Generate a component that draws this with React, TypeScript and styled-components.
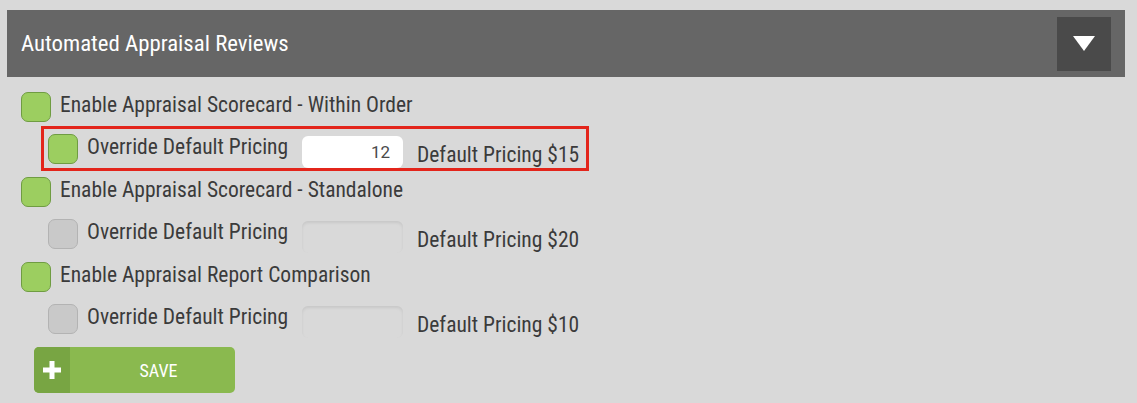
import React, { useState } from 'react';
import styled, { createGlobalStyle } from 'styled-components';

const GlobalStyle = createGlobalStyle`
    body {
        margin : 0;
        background-color : #d9d9d9;
        font-family : "Roboto Condensed", Roboto, "Liberation Sans", sans-serif;
    }
`;

const Page = styled.div`
    padding : 10px 12px 0 7px;
    height : 403px;
    box-sizing : border-box;
`;

const Header = styled.div`
    height : 67px;
    background-color : #666666;
    display : flex;
    align-items : center;
    justify-content : space-between;
    padding : 0 14px;
`;

const HeaderTitle = styled.h2`
    margin : 0;
    color : #ffffff;
    font-size : 22.8px;
    font-weight : 400;
`;

const ToggleBtn = styled.button`
    width : 54px;
    height : 54px;
    border : none;
    background-color : #4a4a4a;
    display : flex;
    align-items : center;
    justify-content : center;
    padding : 0;
`;

const Body = styled.div`
    padding : 15px 0 0 14px;
    display : flex;
    flex-direction : column;
    align-items : flex-start;
`;

const Group = styled.div`
    display : flex;
    flex-direction : column;
    align-items : flex-start;
`;

const MainRow = styled.label`
    display : flex;
    align-items : flex-start;
    height : 30px;
    gap : 9px;
    color : #3b3b3b;
    font-size : 21.5px;
    line-height : 26px;
    white-space : nowrap;
`;

const Box = styled.span<{ $checked: boolean }>`
    width : 30px;
    height : 30px;
    box-sizing : border-box;
    border-radius : 7px;
    flex-shrink : 0;
    background-color : ${(p) => (p.$checked ? '#9cce60' : '#c9c9c9')};
    border : 1.5px solid ${(p) => (p.$checked ? '#6f9c42' : '#b3b3b3')};
`;

const SubWrap = styled.div<{ $highlight?: boolean }>`
    display : flex;
    align-items : flex-start;
    height : 34px;
    margin : 4px 0 6px 20px;
    padding : 5px 7px 0 4px;
    border : 3px solid ${(p) => (p.$highlight ? '#e3251b' : 'transparent')};
`;

const SubLabel = styled.span`
    width : 201px;
    flex-shrink : 0;
    white-space : nowrap;
    margin-left : 9px;
    color : #3b3b3b;
    font-size : 21.5px;
    line-height : 26px;
`;

const PriceInput = styled.input<{ $filled: boolean }>`
    width : 101px;
    height : 32px;
    flex-shrink : 0;
    box-sizing : border-box;
    margin : 2px 0 0 14px;
    border-radius : 6px;
    border : none;
    text-align : right;
    padding : 0 13px;
    font-family : Roboto, sans-serif;
    font-size : 17px;
    color : #4a4a4a;
    background-color : ${(p) => (p.$filled ? '#ffffff' : '#d9d9d9')};
    box-shadow : ${(p) => (p.$filled ? 'none' : 'inset 0 2px 3px rgba(0,0,0,0.08)')};
    outline : none;
`;

const DefaultText = styled.span`
    margin : 10px 0 0 14px;
    white-space : nowrap;
    color : #3b3b3b;
    font-size : 21.5px;
    line-height : 22px;
`;

const SaveBtn = styled.button`
    margin : 0 0 0 13px;
    width : 201px;
    height : 46px;
    border : none;
    border-radius : 5px;
    overflow : hidden;
    padding : 0;
    display : flex;
    background-color : #8ab94f;
`;

const PlusPart = styled.span`
    width : 36px;
    height : 100%;
    background-color : #78a543;
    display : flex;
    align-items : center;
    justify-content : center;
`;

const SaveText = styled.span`
    flex : 1;
    display : flex;
    align-items : center;
    justify-content : center;
    padding-left : 12px;
    color : #ffffff;
    font-family : "Roboto Condensed", Roboto, sans-serif;
    font-size : 18px;
    font-weight : 400;
`;

type Item = {
    title: string;
    override: boolean;
    value: string;
    price: number;
    highlight?: boolean;
};

const items: Item[] = [
    { title: 'Enable Appraisal Scorecard - Within Order', override: true, value: '12', price: 15, highlight: true },
    { title: 'Enable Appraisal Scorecard - Standalone', override: false, value: '', price: 20 },
    { title: 'Enable Appraisal Report Comparison', override: false, value: '', price: 10 },
];

const App = () => {
    const [values, setValues] = useState(items.map((i) => i.value));

    return (
        <Page>
            <GlobalStyle />
            <Header>
                <HeaderTitle>Automated Appraisal Reviews</HeaderTitle>
                <ToggleBtn>
                    <svg width="22" height="15" viewBox="0 0 22 15">
                        <polygon points="0,0 22,0 11,15" fill="#ffffff" />
                    </svg>
                </ToggleBtn>
            </Header>
            <Body>
                {items.map((item, idx) => (
                    <Group key={item.title}>
                        <MainRow>
                            <Box $checked={true} />
                            {item.title}
                        </MainRow>
                        <SubWrap $highlight={item.highlight}>
                            <Box $checked={item.override} />
                            <SubLabel>Override Default Pricing</SubLabel>
                            <PriceInput
                                $filled={item.override}
                                value={values[idx]}
                                onChange={(e) => {
                                    const next = [...values];
                                    next[idx] = e.target.value;
                                    setValues(next);
                                }}
                            />
                            <DefaultText>Default Pricing ${item.price}</DefaultText>
                        </SubWrap>
                    </Group>
                ))}
                <SaveBtn>
                    <PlusPart>
                        <svg width="18" height="18" viewBox="0 0 18 18">
                            <rect x="6.5" y="0" width="5" height="18" fill="#ffffff" />
                            <rect x="0" y="6.5" width="18" height="5" fill="#ffffff" />
                        </svg>
                    </PlusPart>
                    <SaveText>SAVE</SaveText>
                </SaveBtn>
            </Body>
        </Page>
    );
};

export default App;
